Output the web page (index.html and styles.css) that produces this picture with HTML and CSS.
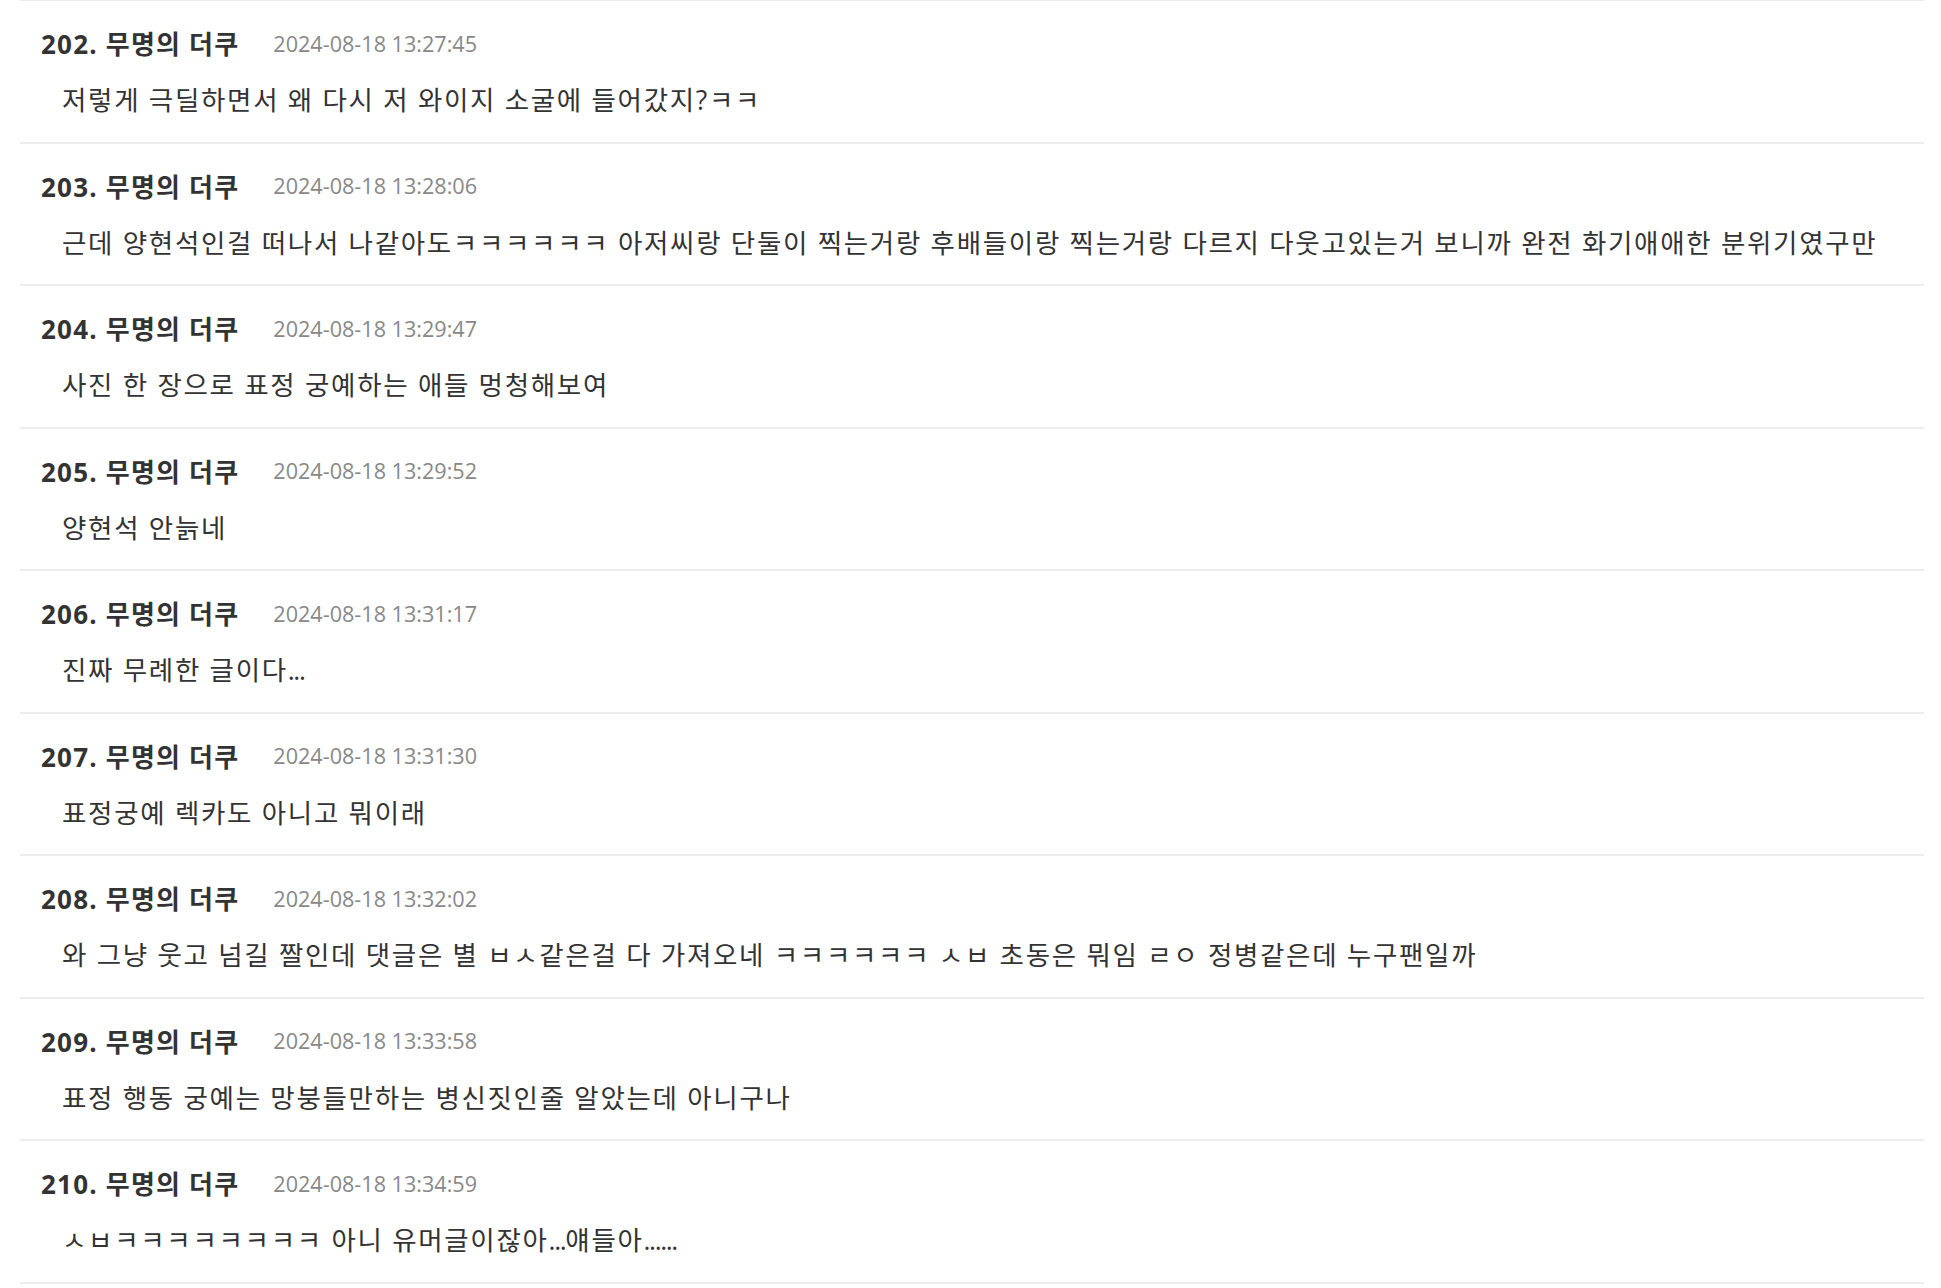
FILE: index.html
```html
<!DOCTYPE html>
<html lang="ko">
<head>
<meta charset="utf-8">
<link rel="stylesheet" href="styles.css">
</head>
<body>
<ul class="comments">
  <li class="comment">
    <div class="meta"><span class="author">202. 무명의 더쿠</span><span class="date">2024-08-18 13:27:45</span></div>
    <p class="text">저렇게 극딜하면서 왜 다시 저 와이지 소굴에 들어갔지?ㅋㅋ</p>
  </li>
  <li class="comment">
    <div class="meta"><span class="author">203. 무명의 더쿠</span><span class="date">2024-08-18 13:28:06</span></div>
    <p class="text">근데 양현석인걸 떠나서 나같아도ㅋㅋㅋㅋㅋㅋ 아저씨랑 단둘이 찍는거랑 후배들이랑 찍는거랑 다르지 다웃고있는거 보니까 완전 화기애애한 분위기였구만</p>
  </li>
  <li class="comment">
    <div class="meta"><span class="author">204. 무명의 더쿠</span><span class="date">2024-08-18 13:29:47</span></div>
    <p class="text">사진 한 장으로 표정 궁예하는 애들 멍청해보여</p>
  </li>
  <li class="comment">
    <div class="meta"><span class="author">205. 무명의 더쿠</span><span class="date">2024-08-18 13:29:52</span></div>
    <p class="text">양현석 안늙네</p>
  </li>
  <li class="comment">
    <div class="meta"><span class="author">206. 무명의 더쿠</span><span class="date">2024-08-18 13:31:17</span></div>
    <p class="text">진짜 무례한 글이다<span class="dots">...</span></p>
  </li>
  <li class="comment">
    <div class="meta"><span class="author">207. 무명의 더쿠</span><span class="date">2024-08-18 13:31:30</span></div>
    <p class="text">표정궁예 렉카도 아니고 뭐이래</p>
  </li>
  <li class="comment">
    <div class="meta"><span class="author">208. 무명의 더쿠</span><span class="date">2024-08-18 13:32:02</span></div>
    <p class="text">와 그냥 웃고 넘길 짤인데 댓글은 별 ㅂㅅ같은걸 다 가져오네 ㅋㅋㅋㅋㅋㅋ ㅅㅂ 초동은 뭐임 ㄹㅇ 정병같은데 누구팬일까</p>
  </li>
  <li class="comment">
    <div class="meta"><span class="author">209. 무명의 더쿠</span><span class="date">2024-08-18 13:33:58</span></div>
    <p class="text">표정 행동 궁예는 망붕들만하는 병신짓인줄 알았는데 아니구나</p>
  </li>
  <li class="comment">
    <div class="meta"><span class="author">210. 무명의 더쿠</span><span class="date">2024-08-18 13:34:59</span></div>
    <p class="text">ㅅㅂㅋㅋㅋㅋㅋㅋㅋㅋ 아니 유머글이잖아<span class="dots">...</span>얘들아<span class="dots">......</span></p>
  </li>
</ul>
</body>
</html>
```
FILE: styles.css
```css
html, body {
  margin: 0;
  padding: 0;
  background: #fff;
}
body {
  font-family: "Open Sans", "Noto Sans CJK KR", sans-serif;
  color: #333;
}
.comments {
  list-style: none;
  margin: 0 0 0 20px;
  padding: 0;
  width: 1904px;
  border-top: 1px solid #ececec;
}
.comment {
  padding: 20px 0 19.5px 21px;
  border-bottom: 2px solid #ececec;
}
.meta {
  display: flex;
  align-items: center;
  height: 44px;
  gap: 34px;
}
.author {
  font-weight: 700;
  font-size: 26px;
  letter-spacing: 1.2px;
  color: #333;
}
.date {
  font-size: 21.6px;
  color: #888;
}
.text {
  margin: 13px 0 0 21px;
  line-height: 44px;
  font-size: 26.5px;
  letter-spacing: 1.7px;
  color: #333;
}
.dots {
  letter-spacing: -1.4px;
}
```
